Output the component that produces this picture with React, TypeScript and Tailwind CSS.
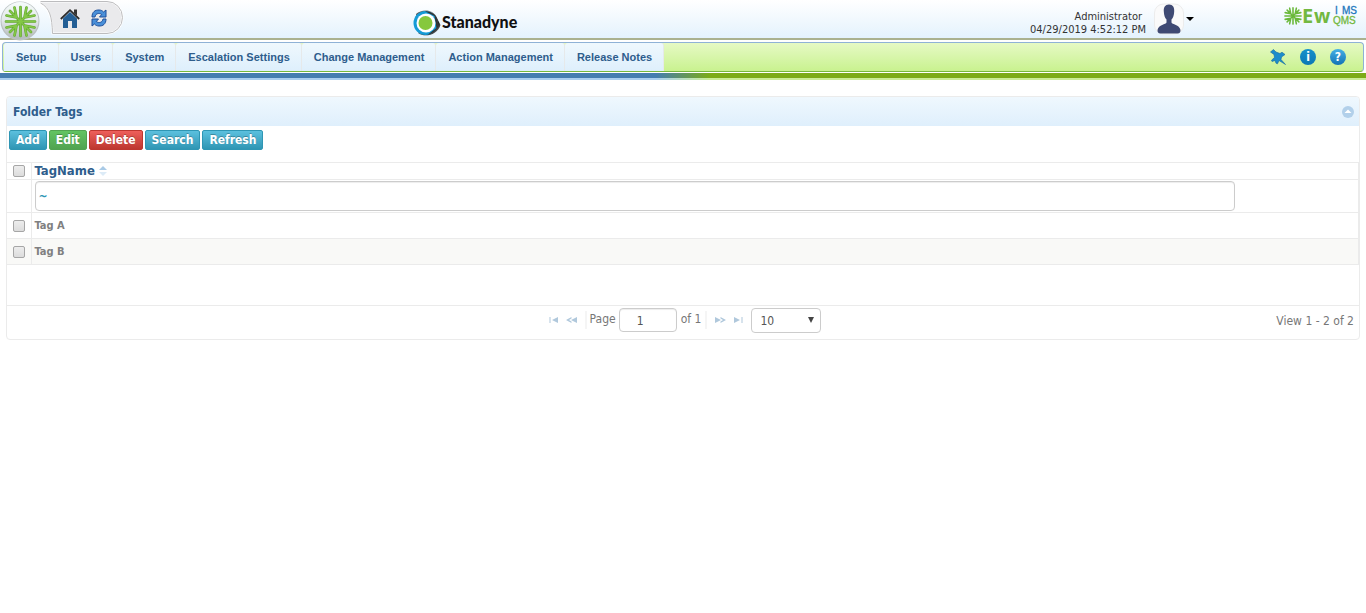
import React from "react";

const MENU = [
  "Setup",
  "Users",
  "System",
  "Escalation Settings",
  "Change Management",
  "Action Management",
  "Release Notes",
];

const ROWS = ["Tag A", "Tag B"];

const BLUE = "border-[#2f96b4] from-[#5bc0de] to-[#2f96b4]";
const GREEN = "border-[#51a351] from-[#62c462] to-[#51a351]";
const RED = "border-[#bd362f] from-[#ee5f5b] to-[#bd362f]";

const ACTIONS = [
  { label: "Add", tone: BLUE },
  { label: "Edit", tone: GREEN },
  { label: "Delete", tone: RED },
  { label: "Search", tone: BLUE },
  { label: "Refresh", tone: BLUE },
];

const QUARTERS = [0, 90, 180, 270];

function Burst({ color, width }: { color: string; width: number }) {
  return (
    <g stroke={color} strokeWidth={width} strokeLinecap="round" fill="none">
      {QUARTERS.map((a) => (
        <path
          key={a}
          d="M0 0V-14.500M0 0L10.500 -10.500M4 -4L6 -14M4 -4L14 -6"
          transform={`rotate(${a})`}
        />
      ))}
    </g>
  );
}

function AppBadge() {
  return (
    <svg viewBox="0 0 40 42" className="h-[42px] w-10" aria-hidden="true">
      <defs>
        <linearGradient id="disc" x1="0" y1="0" x2="0" y2="1">
          <stop offset="0" stopColor="#f6fbfb" />
          <stop offset="0.5" stopColor="#e2e8e8" />
          <stop offset="1" stopColor="#b3babb" />
        </linearGradient>
      </defs>
      <circle cx="20" cy="21" r="19.5" fill="#bac1c1" />
      <circle cx="20" cy="20.5" r="18.5" fill="url(#disc)" />
      <g transform="translate(20.5 21.5)">
        <Burst color="#5fa52f" width={2.7} />
        <Burst color="#84c747" width={1.7} />
      </g>
    </svg>
  );
}

function HomeIcon() {
  return (
    <svg viewBox="0 0 20 20" className="h-5 w-5" aria-hidden="true">
      <path d="M3 10.5L10 4l7 6.500V20h-5v-7H8v7H3z" fill="#245f95" />
      <path d="M14 1.500h3v6l-3-2.500z" fill="#333" />
      <path d="M.8 11L10 2.200 19.200 11" fill="none" stroke="#2b2b2b" strokeWidth="1.800" />
    </svg>
  );
}

function SyncIcon() {
  return (
    <svg viewBox="0 0 16 18" className="h-[18px] w-4" aria-hidden="true">
      <path
        d="M1 8C1 3 4 .8 8 1c2 0 3.500.8 4.500 2L15 1v7H8.500l2.200-2.500C8 3.500 4.500 4.500 4 8z"
        fill="#4a90d9"
        stroke="#1f4f9a"
        strokeWidth="1"
      />
      <path
        d="M15 10c0 5-3 7.200-7 7-2 0-3.500-.8-4.500-2L1 17v-7h6.500l-2.200 2.500C8 14.500 11.500 13.500 12 10z"
        fill="#4a90d9"
        stroke="#1f4f9a"
        strokeWidth="1"
      />
    </svg>
  );
}

function StanadyneLogo() {
  return (
    <svg viewBox="0 0 110 30" className="h-[30px] w-[110px]" role="img" aria-label="Stanadyne">
      <defs>
        <linearGradient id="ring" x1="0" y1="0" x2="1" y2="1">
          <stop offset="0" stopColor="#444" />
          <stop offset="0.35" stopColor="#999" />
          <stop offset="0.7" stopColor="#222" />
          <stop offset="1" stopColor="#888" />
        </linearGradient>
      </defs>
      <path d="M5 6C11 .5 23 1 26 10l3.500 7c-3 10-15 12.500-22 8.500z" fill="url(#ring)" />
      <circle cx="14.500" cy="15" r="12" fill="#159bd7" />
      <path d="M14 3.300A11.700 11.700 0 0 1 17 26.500L25.500 20l-2-12z" fill="#333" />
      <circle cx="15" cy="15" r="9.500" fill="#fff" />
      <circle cx="14.500" cy="15" r="7" fill="#86c83d" />
      <text x="31" y="20" fontFamily="Lato, sans-serif" fontWeight="900" fontSize="16" fill="#111">
        Stanadyne
      </text>
    </svg>
  );
}

function EwqmsLogo() {
  return (
    <svg viewBox="0 0 76 30" className="h-[30px] w-[76px]" role="img" aria-label="EwQMS IMS">
      <g transform="translate(9 16) scale(.56)">
        <Burst color="#6ab83a" width={2.8} />
      </g>
      <g fontFamily="'Open Sans', sans-serif" fontWeight="700" fill="#72b840">
        <text x="18" y="23" fontSize="20">E</text>
        <text x="30" y="23" fontSize="19">w</text>
      </g>
      <g fontFamily="'Liberation Sans', sans-serif" fontSize="10" strokeWidth=".3">
        <text x="51" y="14" fill="#1c77bd" stroke="#1c77bd">I</text>
        <text x="58" y="14" fill="#1c77bd" stroke="#1c77bd">MS</text>
        <text x="49" y="24" fill="#72b840" stroke="#72b840">QMS</text>
      </g>
    </svg>
  );
}

function Avatar() {
  return (
    <svg viewBox="0 0 30 32" className="h-8 w-[30px]" aria-hidden="true">
      <rect x=".5" y="1" width="29" height="30" rx="9" fill="#fafafa" stroke="#ececec" />
      <path
        d="M15 1.500c-4 0-5.500 3-5.200 7 .2 4 1.200 6.500 2.700 8v3c-.5 2-8 2-9 7.500 0 2 .5 3.500 3 3.500h17c2.500 0 3-1.500 3-3.500-1-5.500-8.500-5.500-9-7.500v-3c1.500-1.500 2.500-4 2.700-8 .3-4-1.200-7-5.200-7z"
        fill="#3f4a73"
      />
    </svg>
  );
}

function PinIcon() {
  return (
    <svg viewBox="0 0 16 16" className="h-4 w-4" aria-hidden="true">
      <path
        d="M.5 3L3.500.5 6 3l4 1.500 2-1.300 3 2.300-3.500 2.500-.5 2.500L15.500 15.500 9 11.500l-1.500 3.300-1.500-.6-1-2.700-3 1-.5-1.300L4.500 8.500 4 5.500z"
        fill="#1b8dcc"
        stroke="#12699e"
        strokeWidth=".6"
      />
    </svg>
  );
}

function Bubble({ children, label, tone }: { children: string; label: string; tone: string }) {
  return (
    <button
      aria-label={label}
      className={`flex h-4 w-4 items-center justify-center rounded-full bg-linear-to-b text-[12px] leading-4 font-bold text-white ${tone}`}
    >
      {children}
    </button>
  );
}

function PagerButton({ label, d }: { label: string; d: string }) {
  return (
    <button aria-label={label} className="flex h-4 w-[18px] items-center justify-center">
      <svg viewBox="0 0 12 8" className="h-2 w-3" aria-hidden="true">
        <path d={d} fill="#b0c8dc" />
      </svg>
    </button>
  );
}

function Tick({ label }: { label: string }) {
  return (
    <input
      type="checkbox"
      aria-label={label}
      className="block h-3 w-3 appearance-none rounded-[2px] border border-[#a6a6a6] bg-linear-to-b from-[#ededed] to-[#dcdcdc]"
    />
  );
}

export default function App() {
  return (
    <div className="min-h-screen bg-white font-['DejaVu_Sans_Condensed','DejaVu_Sans',sans-serif]">
      <header className="flex h-10 items-start border-b-2 border-[#aab18f] bg-linear-to-b from-white to-[#e4f2fd]">
        <div className="flex w-[30%] items-start">
          <a href="#menu" aria-label="Main menu" className="relative z-10 block">
            <AppBadge />
          </a>
          <div className="relative h-9 w-[84px]">
            <svg viewBox="0 0 84 36" className="h-9 w-[84px]" aria-hidden="true">
              <path
                d="M.5 1.500H67a15.500 16 0 0 1 0 32H12.500C12 20 10 8 .5 4z"
                fill="#eaeaec"
                stroke="#fff"
                strokeWidth="2"
              />
              <path d="M.5 1.500H67a15.500 16 0 0 1 0 32H12.500C12 17 10 8 .5 3" fill="none" stroke="#bcbcbe" />
            </svg>
            <div className="absolute inset-0 flex items-center gap-[11px] pl-5">
              <a href="#home" aria-label="Home">
                <HomeIcon />
              </a>
              <a href="#refresh" aria-label="Reload">
                <SyncIcon />
              </a>
            </div>
          </div>
        </div>
        <div className="pt-2 pl-px">
          <StanadyneLogo />
        </div>
        <div className="flex flex-1 items-start justify-end">
          <div className="pt-[10px] text-right text-[11px] leading-[13px] text-[#333]">
            <div className="pr-1">Administrator</div>
            <div>04/29/2019 4:52:12 PM</div>
          </div>
          <button aria-label="Account" className="ml-2 flex items-center pt-[3px]">
            <Avatar />
            <svg viewBox="0 0 8 4" className="ml-0.5 h-1 w-2" aria-hidden="true">
              <path d="M0 0h8L4 4z" fill="#000" />
            </svg>
          </button>
          <div className="ml-[90px] pr-1.5">
            <EwqmsLogo />
          </div>
        </div>
      </header>

      <nav className="mx-0.5 mt-0.5 flex h-[30px] items-stretch justify-between rounded-[4px] border border-[#8fb2d6] border-b-[#77b83c] bg-linear-to-b from-[#e6f9c4] to-[#c9f28f]">
        <ul className="flex pl-px font-['Liberation_Sans',sans-serif] text-[11px] leading-7 font-bold text-[#2e5d8c]">
          {MENU.map((item) => (
            <li key={item} className="rounded-t-[3px] border-r border-[#e6e9ea] bg-linear-to-b from-[#eff8fd] to-[#deeffc]">
              <a href="#menu" className="block pr-[11px] pl-3">
                {item}
              </a>
            </li>
          ))}
        </ul>
        <div className="flex items-center gap-[14px] pr-[17px]">
          <button aria-label="Pin">
            <PinIcon />
          </button>
          <Bubble label="Information" tone="from-[#1690cb] to-[#0c78b4]">i</Bubble>
          <Bubble label="Help" tone="from-[#45b0e6] to-[#1173b5]">?</Bubble>
        </div>
      </nav>
      <div className="mt-px h-[5px] bg-[linear-gradient(to_right,#457db0_0%,#457db0_48%,#7cab17_52%,#7cab17_100%)]" />
      <div className="h-0.5 bg-[linear-gradient(to_right,#a9cdee_0%,#a9cdee_48%,#c9ec96_52%,#c9ec96_100%)]" />

      <main className="mx-1.5 mt-4 rounded-[4px] border border-[#ebebeb]">
        <div className="flex h-[29px] items-center justify-between rounded-t-[3px] bg-linear-to-b from-[#eff8fe] to-[#dfeffc] pr-[5px] pl-1.5">
          <h1 className="text-[12px] leading-4 font-bold text-[#2e5d8c]">Folder Tags</h1>
          <button aria-label="Collapse">
            <svg viewBox="0 0 12 12" className="h-3 w-3" aria-hidden="true">
              <circle cx="6" cy="6" r="6" fill="#b2d0ea" />
              <path d="M2.500 7L6 3.500 9.500 7z" fill="#fff" />
            </svg>
          </button>
        </div>
        <div className="flex gap-0.5 px-0.5 pt-1 pb-3">
          {ACTIONS.map(({ label, tone }) => (
            <button
              key={label}
              className={`h-5 rounded-[2px] border bg-linear-to-b px-1.5 text-[12px] leading-[18px] font-bold text-white [text-shadow:0_-1px_0_rgba(0,0,0,0.25)] ${tone}`}
            >
              {label}
            </button>
          ))}
        </div>

        <table className="w-full table-fixed border-collapse text-left">
          <colgroup>
            <col className="w-6" />
            <col />
          </colgroup>
          <thead>
            <tr className="h-[17px] border-y border-[#ebebeb]">
              <th className="border-r border-[#ebebeb] p-0 pl-1.5">
                <Tick label="Select all" />
              </th>
              <th className="border-r border-[#ebebeb] p-0 pl-[3px] text-[13px] leading-4 font-bold text-[#2e5d8c]">
                <button className="flex items-center gap-1">
                  TagName
                  <svg viewBox="0 0 8 10" className="h-2.5 w-2" aria-hidden="true">
                    <path d="M0 4L4 0l4 4z" fill="#a9cae6" />
                    <path d="M0 6h8l-4 4z" fill="#dcebf7" />
                  </svg>
                </button>
              </th>
            </tr>
            <tr className="h-[33px] border-b border-[#ebebeb]">
              <th className="border-r border-[#ebebeb] p-0" />
              <th className="border-r border-[#ebebeb] p-0 pr-[123px] pl-[3px]">
                <div className="flex h-[30px] items-center rounded-[4px] border border-[#ccc] px-[3px] shadow-[inset_0_1px_1px_rgba(0,0,0,0.075)]">
                  <button aria-label="Filter operator" className="text-[12px] leading-4 font-bold text-[#2f96b4]">
                    ~
                  </button>
                  <input aria-label="Filter by tag name" className="min-w-0 flex-1 bg-transparent text-[12px] outline-none" />
                </div>
              </th>
            </tr>
          </thead>
          <tbody>
            {ROWS.map((row) => (
              <tr key={row} className="h-[26px] border-b border-[#ebebeb] even:bg-[#f9f9f7]">
                <td className="border-r border-[#ebebeb] p-0 pl-1.5">
                  <Tick label={`Select ${row}`} />
                </td>
                <td className="border-r border-[#ebebeb] p-0 pl-[3px] text-[11px] leading-4 font-bold text-[#808080]">{row}</td>
              </tr>
            ))}
          </tbody>
        </table>

        <div className="mt-10 grid h-[34px] grid-cols-[1fr_auto_1fr] items-start border-t border-[#ebebeb] pt-0.5 text-[12px] text-[#777]">
          <div />
          <div className="flex items-start">
            <div className="flex items-center pt-1">
              <PagerButton label="First page" d="M1.500 1h1v6h-1zM4 4l6-3v6z" />
              <PagerButton label="Previous page" d="M5.500 1v1.500L3 4l2.500 1.500V7L0 4zM5 4l6-3v6z" />
            </div>
            <span className="mt-[3px] ml-1 h-[18px] w-0.5 bg-[#f5f5f5]" />
            <label htmlFor="page" className="mx-[3px] pt-[3px] leading-4">
              Page
            </label>
            <input
              id="page"
              defaultValue="1"
              className="h-6 w-[58px] rounded-[4px] border border-[#ccc] pt-0.5 pl-[17px] text-[12px] text-[#555] shadow-[inset_0_1px_1px_rgba(0,0,0,0.075)]"
            />
            <span className="ml-1 pt-[3px] leading-4">of 1</span>
            <span className="mt-[3px] mr-1 ml-1 h-[18px] w-0.5 bg-[#f5f5f5]" />
            <div className="flex items-center pt-1">
              <PagerButton label="Next page" d="M1 1l6 3-6 3zM6.500 1v1.500L9 4 6.500 5.500V7L12 4z" />
              <PagerButton label="Last page" d="M2 1l6 3-6 3zM9.500 1h1v6h-1z" />
            </div>
            <div className="relative ml-1">
              <select
                aria-label="Rows per page"
                className="h-[25px] w-[70px] appearance-none rounded-[4px] border border-[#ccc] bg-white pl-2 text-[12px] text-[#555]"
              >
                <option>10</option>
                <option>20</option>
                <option>30</option>
              </select>
              <svg viewBox="0 0 6 6" className="pointer-events-none absolute top-[9px] right-[7px] h-1.5 w-1.5" aria-hidden="true">
                <path d="M0 0h6L3 6z" fill="#444" />
              </svg>
            </div>
          </div>
          <div className="pt-[5px] pr-[5px] text-right leading-4">View 1 - 2 of 2</div>
        </div>
      </main>
    </div>
  );
}
